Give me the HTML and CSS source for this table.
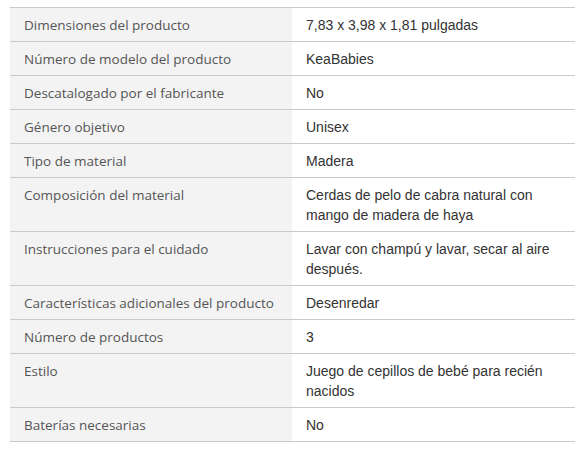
FILE: index.html
```html
<!DOCTYPE html>
<html lang="es">
<head>
<meta charset="utf-8">
<link rel="stylesheet" href="styles.css">
</head>
<body>
<table class="specs">
  <tbody>
    <tr><th class="key">Dimensiones del producto</th><td class="val">7,83 x 3,98 x 1,81 pulgadas</td></tr>
    <tr><th class="key">Número de modelo del producto</th><td class="val">KeaBabies</td></tr>
    <tr><th class="key">Descatalogado por el fabricante</th><td class="val">No</td></tr>
    <tr><th class="key">Género objetivo</th><td class="val">Unisex</td></tr>
    <tr><th class="key">Tipo de material</th><td class="val">Madera</td></tr>
    <tr><th class="key">Composición del material</th><td class="val">Cerdas de pelo de cabra natural con mango de madera de haya</td></tr>
    <tr><th class="key">Instrucciones para el cuidado</th><td class="val">Lavar con champú y lavar, secar al aire después.</td></tr>
    <tr><th class="key">Características adicionales del producto</th><td class="val">Desenredar</td></tr>
    <tr><th class="key">Número de productos</th><td class="val">3</td></tr>
    <tr><th class="key">Estilo</th><td class="val">Juego de cepillos de bebé para recién nacidos</td></tr>
    <tr><th class="key">Baterías necesarias</th><td class="val">No</td></tr>
  </tbody>
</table>
</body>
</html>
```
FILE: styles.css
```css
html, body {
  margin: 0;
  padding: 0;
  background: #ffffff;
}
body {
  padding: 7px 12px 0 10px;
}
.specs {
  width: 565px;
  border-collapse: collapse;
  border-bottom: 1px solid #c9c9c9;
  table-layout: fixed;
}
.specs tr {
  border-top: 1px solid #c9c9c9;
}
.key, .val {
  vertical-align: top;
  text-align: left;
  padding: 7px 14px 6px 14px;
  font-size: 14px;
  line-height: 20px;
  font-weight: normal;
}
.key {
  width: 254px;
  background: #f3f3f3;
  color: #555555;
  font-family: "Open Sans", "Noto Sans", sans-serif;
  font-size: 13.5px;
}
.val {
  color: #333333;
  font-family: "Liberation Sans", Arial, sans-serif;
}
```
